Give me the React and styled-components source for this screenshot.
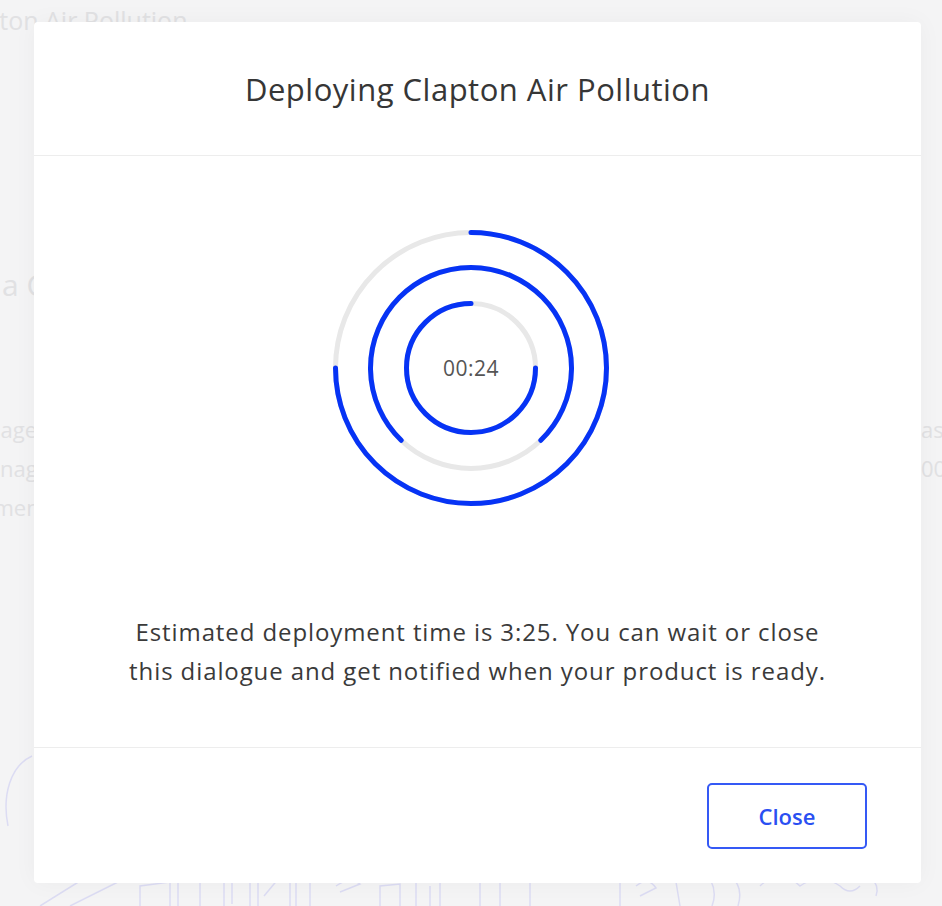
import React from "react";
import styled, { createGlobalStyle } from "styled-components";

const GlobalStyle = createGlobalStyle`
  html, body {
    margin: 0;
    padding: 0;
    background: #f4f4f5;
  }
  body {
    font-family: "Open Sans", "Noto Sans", sans-serif;
  }
`;

// page behind the dialog (washed out)
const Page = styled.div`
  position: relative;
  width: 942px;
  height: 906px;
  overflow: hidden;
  background: #f4f4f5;
`;

const Backdrop = styled.div`
  display: flex;
  flex-direction: column;
  height: 100%;
  color: #e1e1e3;
`;

const BgTitle = styled.div`
  font-size: 25px;
  line-height: 40px;
  margin-left: -52px;
  white-space: nowrap;
`;

const BgColumns = styled.div`
  display: grid;
  grid-template-columns: 921px 1fr;
  margin-top: 225px;
`;

const BgColumn = styled.div`
  display: flex;
  flex-direction: column;
  white-space: nowrap;
`;

const BgHeading = styled.div`
  font-size: 30px;
  line-height: 40px;
  margin-bottom: 105px;
  margin-left: ${(p) => p.$shift || "0"};
`;

const BgLine = styled.div`
  font-size: 22px;
  line-height: 39px;
  margin-left: ${(p) => p.$shift || "0"};
`;

const BgArt = styled.svg`
  margin-top: auto;
  display: block;
`;

// modal
const Overlay = styled.div`
  position: absolute;
  inset: 0;
  display: flex;
  padding: 22px 21px 23px 34px;
  box-sizing: border-box;
`;

const Dialog = styled.div`
  flex: 1;
  display: flex;
  flex-direction: column;
  background: #fff;
  border-radius: 4px;
  box-shadow: 0 0 24px rgba(0, 0, 0, 0.04);
`;

const Header = styled.div`
  height: 133px;
  display: flex;
  align-items: center;
  justify-content: center;
  border-bottom: 1px solid #ededed;
`;

const Title = styled.h2`
  margin: 0;
  font-size: 31px;
  font-weight: 400;
  letter-spacing: 0.5px;
  color: #363636;
`;

const Body = styled.div`
  flex: 1;
  display: flex;
  flex-direction: column;
  align-items: center;
  padding-top: 72px;
  border-bottom: 1px solid #ededed;
`;

const Rings = styled.div`
  position: relative;
  width: 280px;
  height: 280px;
  margin-right: 13px;
`;

const Timer = styled.span`
  position: absolute;
  inset: 0;
  display: flex;
  align-items: center;
  justify-content: center;
  font-size: 21px;
  letter-spacing: 0.5px;
  color: #555;
`;

const Message = styled.p`
  margin: 104px 0 0;
  text-align: center;
  font-size: 24px;
  letter-spacing: 0.9px;
  line-height: 39px;
  color: #3a3a3a;
`;

const Footer = styled.div`
  height: 135px;
  display: flex;
  align-items: center;
  justify-content: flex-end;
  padding-right: 54px;
`;

const Button = styled.button`
  width: 160px;
  height: 66px;
  border: 2px solid #3559f5;
  border-radius: 5px;
  background: #fff;
  color: #2a4ff2;
  font-family: inherit;
  font-size: 22px;
  font-weight: 600;
  cursor: pointer;
`;

const BLUE = "#0633f5";
const TRACK = "#e8e8e8";

function ProgressRings() {
  return (
    <svg width="280" height="280" viewBox="0 0 280 280" fill="none">
      <g strokeWidth="5" strokeLinecap="round">
        <circle cx="140" cy="140" r="135.5" stroke={TRACK} />
        <path d="M140 4.5 A135.5 135.5 0 1 1 4.5 140" stroke={BLUE} />
        <circle cx="140" cy="140" r="100.5" stroke={TRACK} />
        <path d="M70.2 212.3 A100.5 100.5 0 1 1 209.8 212.3" stroke={BLUE} />
        <circle cx="140" cy="140" r="64.5" stroke={TRACK} />
        <path d="M204.5 140 A64.5 64.5 0 1 1 140 75.5" stroke={BLUE} />
      </g>
    </svg>
  );
}

function CitySketch() {
  return (
    <BgArt width="942" height="170" viewBox="0 0 942 170" fill="none">
      <g stroke="#dcdcf3" strokeWidth="1.5">
        <path d="M32 20 C10 30 2 60 8 90" />
        <path d="M40 170 L120 120 L200 110" />
        <path d="M70 170 L150 130" />
        <path d="M140 170 L140 150 L170 146 L170 170" />
        <path d="M178 170 L178 142 L200 138 L200 170" />
        <path d="M224 170 L224 130 L250 128 L250 170" />
        <path d="M232 168 L232 140 L244 138" />
        <path d="M258 170 L258 132 L290 130 L290 170" />
        <path d="M264 160 L284 136" />
        <path d="M296 170 L296 128 L310 126 L310 170" />
        <path d="M336 150 Q350 140 360 148 L340 156" />
        <path d="M380 170 L380 150 L400 148 L400 170" />
        <path d="M416 170 L416 140 L440 138 L440 170" />
        <path d="M430 150 L430 170" />
        <path d="M480 170 L480 140 L500 138 L500 170" />
        <path d="M530 170 L530 132" />
        <path d="M620 170 L620 130" />
        <path d="M636 150 Q648 140 656 152 L640 160" />
        <path d="M676 146 L680 170" />
        <path d="M700 130 Q720 150 712 170 M730 140 Q744 150 738 170" />
        <path d="M760 150 Q780 130 800 150 Q820 136 840 150 Q850 160 860 150" />
        <path d="M870 140 Q880 150 876 160" />
      </g>
    </BgArt>
  );
}

export default function App() {
  return (
    <Page>
      <GlobalStyle />
      <Backdrop>
        <BgTitle>Clapton Air Pollution</BgTitle>
        <BgColumns>
          <BgColumn>
            <BgHeading $shift="-98px">Create a Catalogue</BgHeading>
            <BgLine $shift="-26px">Usage of data</BgLine>
            <BgLine $shift="-32px">Manage access</BgLine>
            <BgLine $shift="-54px">Comments</BgLine>
          </BgColumn>
          <BgColumn>
            <BgHeading>&nbsp;</BgHeading>
            <BgLine>assets</BgLine>
            <BgLine>0000</BgLine>
          </BgColumn>
        </BgColumns>
        <CitySketch />
      </Backdrop>
      <Overlay>
        <Dialog role="dialog" aria-labelledby="deploy-title">
          <Header>
            <Title id="deploy-title">Deploying Clapton Air Pollution</Title>
          </Header>
          <Body>
            <Rings>
              <ProgressRings />
              <Timer>00:24</Timer>
            </Rings>
            <Message>
              Estimated deployment time is 3:25. You can wait or close
              <br />
              this dialogue and get notified when your product is ready.
            </Message>
          </Body>
          <Footer>
            <Button>Close</Button>
          </Footer>
        </Dialog>
      </Overlay>
    </Page>
  );
}
